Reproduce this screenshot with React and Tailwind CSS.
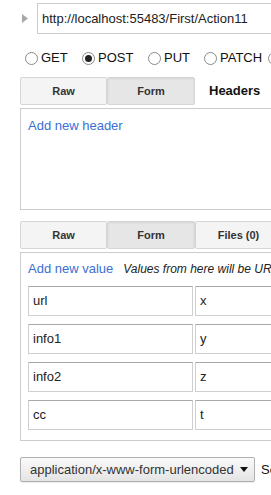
import React from 'react';

const methods = [
  { label: 'GET', w: 'w-[57px]', checked: false },
  { label: 'POST', w: 'w-[66px]', checked: true },
  { label: 'PUT', w: 'w-[56px]', checked: false },
  { label: 'PATCH', w: 'w-[64px]', checked: false },
  { label: 'DELETE', w: 'w-[80px]', checked: false },
];

const rows = [
  ['url', 'x'],
  ['info1', 'y'],
  ['info2', 'z'],
  ['cc', 't'],
];

function Radio({ checked }) {
  return (
    <span className="flex items-center justify-center w-[13px] h-[13px] rounded-full border border-[#8a8a8a] bg-white shrink-0">
      {checked && <span className="w-[7px] h-[7px] rounded-full bg-[#222]" />}
    </span>
  );
}

function Tab({ label, active, w }) {
  return (
    <div
      className={`${w} h-full flex items-center justify-center text-[11px] font-bold text-[#333] border border-[#d6d6d6] rounded-[2px] ${
        active ? 'bg-[#e6e6e6] shadow-[inset_0_1px_2px_rgba(0,0,0,0.08)]' : 'bg-[#f4f4f4]'
      }`}
    >
      {label}
    </div>
  );
}

function Field({ value, w }) {
  return (
    <div className={`${w} h-[30px] flex items-center pl-[4px] border border-[#cfcfcf] border-t-[#a9a9a9] bg-white text-[13px] text-[#222] shrink-0`}>
      {value}
    </div>
  );
}

export default function App() {
  return (
    <div className="w-full min-h-[495px] overflow-hidden bg-white">
      <div className="w-[480px] pl-[20px] font-['Liberation_Sans',Arial,sans-serif] text-[13px] text-[#222]">
        {/* URL row */}
        <div className="flex items-center pt-[3px]">
          <svg width="6" height="9" viewBox="0 0 6 9" className="ml-[2px] shrink-0">
            <polygon points="0,0 6,4.5 0,9" fill="#a8a8a8" />
          </svg>
          <div className="ml-[9px] h-[31px] flex-1 flex items-center pl-[4px] border border-[#cccccc] bg-white">
            http://localhost:55483/First/Action11
          </div>
        </div>

        {/* Methods */}
        <div className="flex items-center h-[16px] mt-[16px] pl-[5px]">
          {methods.map((m) => (
            <label key={m.label} className={`${m.w} flex items-center shrink-0`}>
              <Radio checked={m.checked} />
              <span className="ml-[3px] text-[#111]">{m.label}</span>
            </label>
          ))}
        </div>

        {/* Header tabs */}
        <div className="flex items-center h-[28px] mt-[11px]">
          <Tab label="Raw" w="w-[87px]" />
          <Tab label="Form" w="w-[88px]" active />
          <span className="ml-[14px] font-bold text-[13px] text-[#111]">Headers</span>
        </div>

        <div className="mt-[3px] h-[102px] border border-[#cccccc] pt-[7px] pl-[7px]">
          <span className="text-[#3b6fd4]">Add new header</span>
        </div>

        {/* Body tabs */}
        <div className="flex h-[28px] mt-[11px]">
          <Tab label="Raw" w="w-[87px]" />
          <Tab label="Form" w="w-[88px]" active />
          <Tab label="Files (0)" w="w-[87px]" />
        </div>

        <div className="mt-[3px] border border-[#cccccc] pt-[6px] pl-[7px] pb-[10px]">
          <div className="flex items-baseline h-[15px]">
            <span className="text-[#3b6fd4]">Add new value</span>
            <span className="ml-[10px] text-[12px] italic text-[#222]">
              Values from here will be URL encoded
            </span>
          </div>
          <div className="mt-[12px] flex flex-col gap-[8px]">
            {rows.map(([k, v]) => (
              <div key={k} className="flex gap-[2px]">
                <Field value={k} w="w-[165px]" />
                <Field value={v} w="w-[200px]" />
              </div>
            ))}
          </div>
        </div>

        {/* Content type */}
        <div className="flex items-center mt-[16px]">
          <div className="w-[235px] h-[25px] flex items-center pl-[9px] pr-[6px] border border-[#b0b0b0] rounded-[2px] bg-gradient-to-b from-[#fafafa] to-[#e4e4e4] shadow-[0_1px_1px_rgba(0,0,0,0.08)] text-[#333]">
            <span className="flex-1">application/x-www-form-urlencoded</span>
            <svg width="8" height="5" viewBox="0 0 8 5">
              <polygon points="0,0 8,0 4,5" fill="#111" />
            </svg>
          </div>
          <span className="ml-[6px] text-[#111]">Send</span>
        </div>
      </div>
    </div>
  );
}
